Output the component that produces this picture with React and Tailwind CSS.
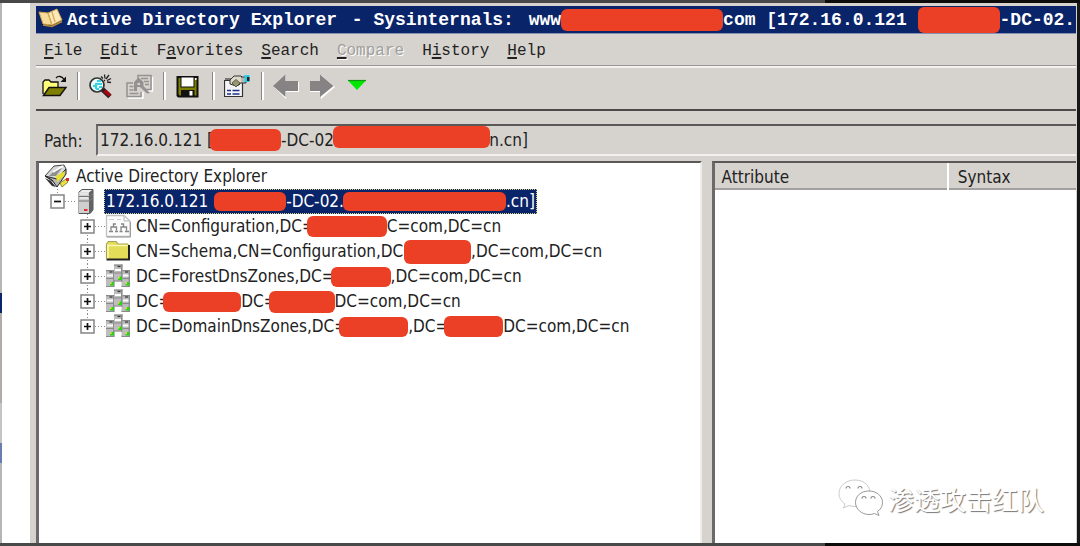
import React from "react";

const UI = "font-['DejaVu_Sans_Condensed','DejaVu_Sans',sans-serif]";
const MONO = "font-['Liberation_Mono',monospace]";

function Mask({ className }) {
  return <span aria-hidden="true" className={`shrink-0 rounded-md bg-[#ec4026] ${className}`} />;
}

function BookIcon() {
  return (
    <svg viewBox="0 0 26 20" className="-mt-1 h-5 w-[26px] shrink-0">
      <path d="M1 4 L10 5 L14 17 L5 16 Z" fill="#f6dc9a" stroke="#c9a04c" strokeWidth="1" />
      <path d="M10 5 L19 1 L24 12 L14 17 Z" fill="#fbeab8" stroke="#c9a04c" strokeWidth="1" />
      <path d="M14 4 L17 14 M10 5 L14 17" stroke="#d8ac58" strokeWidth="1.4" />
      <path d="M5 17 L14 18.500 L24 13.500" fill="none" stroke="#b88a38" strokeWidth="1.5" />
    </svg>
  );
}

function OpenIcon() {
  return (
    <svg viewBox="0 0 28 28" className="size-7">
      <path d="M3 22 V10 L5 8 H9 L11 10 H18 V15" fill="#ffff7a" stroke="#111" strokeWidth="1.3" />
      <path d="M3.500 23.500 L9 15.500 H26 L20 23.500 Z" fill="#808000" stroke="#111" strokeWidth="1.4" />
      <path d="M16 6 C18 3.500 22 4 24 7.500" fill="none" stroke="#111" strokeWidth="1.3" />
      <path d="M26 4.500 V10 H20.500 Z" fill="#111" />
    </svg>
  );
}

function FindIcon() {
  return (
    <svg viewBox="0 0 28 28" className="size-7">
      <circle cx="8" cy="13" r="7" fill="#eaffff" stroke="#333" strokeWidth="1.700" />
      <path d="M4 14 h3 v3 M8 9 h4 M6 12 h5 M10 15 h3 M7 17 h3 M11 12 h2" stroke="#35d5e0" strokeWidth="2" fill="none" />
      <path d="M12 4.500 l2 2 M15.500 2.500 l.5 4 M20 3 l-3 4 M22 6.500 l-4 2 M22 10.500 l-4 -.5 M16 8 l-1 1" stroke="#222" strokeWidth="1.300" />
      <path d="M13.500 17.500 L21 24.500" stroke="#222" strokeWidth="5" />
      <path d="M15.500 18.500 L21 23.500" stroke="#b00010" strokeWidth="3.400" />
    </svg>
  );
}

function CompareIcon() {
  return (
    <svg viewBox="0 0 28 28" className="size-7">
      <path d="M26.500 5 V19 H20 M2 26 H17 V20" fill="none" stroke="#fff" strokeWidth="1.500" />
      <path d="M12 10 V3.500 H25 V17.500 H20" fill="none" stroke="#949291" strokeWidth="1.500" />
      <path d="M15 6.500 h7 M18 9.500 h5 M19 12.500 h4" stroke="#949291" strokeWidth="1.300" />
      <path d="M7 11 H1 V24.500 H15 V20" fill="none" stroke="#949291" strokeWidth="1.500" />
      <path d="M3.500 14.500 h4 M3.500 18 h4 M3.500 21.500 h9" stroke="#949291" strokeWidth="1.300" />
      <path d="M8 19 V10 L12.500 5.500 L17.500 10 V14 L24 21 L21 21.500 L14 15 H11 V19 Z" fill="#949291" />
      <path d="M11.500 12 h2.500" stroke="#d6d3ce" strokeWidth="2" />
    </svg>
  );
}

function SaveIcon() {
  return (
    <svg viewBox="0 0 28 28" className="size-7">
      <path d="M1.500 4 H23.500 V25.500 H3 L1.500 24 Z" fill="#111" />
      <path d="M3.500 6 H21.500 V23.500 H4.500 L3.500 22 Z" fill="#808000" />
      <rect x="5.500" y="4.500" width="14" height="11" fill="#111" />
      <rect x="6.500" y="5.500" width="12" height="9" fill="#fff" />
      <rect x="6" y="18" width="13.500" height="7" fill="#111" />
      <rect x="14.500" y="19" width="3" height="4.500" fill="#fff" />
      <path d="M20 6 h1.500 v2 h-1.500z" fill="#fff" />
    </svg>
  );
}

function PropertiesIcon() {
  return (
    <svg viewBox="0 0 28 28" className="size-7">
      <path d="M.5 8.500 H18.500 V24.500 H.5 Z" fill="#f4f4f4" stroke="#333" strokeWidth="1.200" />
      <path d="M1 7 H9" stroke="#777" strokeWidth="2" />
      <path d="M3 18.500 h4 M8.500 18.500 h7 M3 22 h4 M8.500 22 h7" stroke="#1d2f8d" strokeWidth="1.500" />
      <path d="M6 8 L10 4 H17 L20 7 L15 13 L12 14 L6 12 Z" fill="#ddd9c8" stroke="#333" strokeWidth="1" />
      <path d="M8 11 L12 7.500 L16 11 L12 15 Z" fill="#9a976a" stroke="#444" strokeWidth=".8" />
      <path d="M17 5 H22 V11 H17" fill="#b9b8b0" stroke="#333" strokeWidth="1" />
      <rect x="20.500" y="3" width="5" height="7" fill="#29cbe8" />
      <rect x="23" y="5" width="2.500" height="4" fill="#222" />
    </svg>
  );
}

function ArrowIcon({ right }) {
  return (
    <svg viewBox="0 0 28 28" className="size-7">
      <path
        d={right ? "M0 10 H11 V3 L25 15 L11 27 V20 H0 Z" : "M26 10 H13 V3 L1 15 L13 27 V20 H26 Z"}
        fill="#fff"
      />
      <path
        d={right ? "M0 9 H10 V2.500 L23.500 14 L10 25 V19 H0 Z" : "M25 9 H12.500 V2.500 L0 14 L12.500 25 V19 H25 Z"}
        fill="#858384"
      />
    </svg>
  );
}

function DropIcon() {
  return (
    <svg viewBox="0 0 28 28" className="size-7">
      <path d="M1 8.500 H19 L10 18 Z" fill="#00e800" />
      <path d="M1 8.500 H19" stroke="#139313" strokeWidth="1.200" />
    </svg>
  );
}

function Expander({ open, last }) {
  return (
    <svg viewBox="0 0 25 25" className="h-[25px] w-[25px] shrink-0">
      <path d={last || open ? "M7.500 0 V6" : "M7.500 0 V25"} stroke="#8a8a8a" strokeDasharray="1 2" />
      <path d="M15 12.500 H25" stroke="#8a8a8a" strokeDasharray="1 2" />
      <rect x="1" y="6" width="13" height="13" fill="#fff" stroke="#858585" strokeWidth="1.500" />
      <path d={open ? "M4 12.500 H11" : "M4 12.500 H11 M7.500 9 V16"} stroke="#111" strokeWidth="1.700" />
    </svg>
  );
}

function RootIcon() {
  return (
    <svg viewBox="0 0 28 25" className="h-[25px] w-7 shrink-0">
      <path d="M1 12 L10 2 L20 1 L22 5 L14 16 L8 17 Z" fill="#d8d8d8" stroke="#444" strokeWidth="1" />
      <path d="M5 12 L12 5 L18 4 L12 12 Z" fill="#8e8e8e" />
      <path d="M9 8 L19 2" stroke="#fff" strokeWidth="1.500" />
      <path d="M1 12 L8 16 L13 23 L22 10 V5 L13 15 Z" fill="#b5b5b5" stroke="#222" strokeWidth="1" />
      <path d="M1 14 L7 17 L12 23 L8 22 Z" fill="#333" />
      <path d="M12 12 L21 7 L20 12 L13 18 Z" fill="#e5e02a" />
      <path d="M16 19 L22 15 L24 18 L18 23 Z" fill="#ebe24a" stroke="#6d6a10" strokeWidth=".8" />
      <rect x="22" y="14" width="3" height="3" fill="#d92a25" />
    </svg>
  );
}

function ServerIcon() {
  return (
    <svg viewBox="0 0 25 25" className="h-[25px] w-[25px] shrink-0">
      <path d="M4 3 L7 .5 H18 V21 L15 24.500 H4 Z" fill="#8b8b8b" stroke="#555" strokeWidth="1" />
      <path d="M4 3 H14 V24 H4 Z" fill="#cfcfcf" />
      <path d="M14 3 L18 .5 V21 L15 24.500 H14 Z" fill="#626262" />
      <path d="M4.500 3.500 L7 1 H17 L14 3.500 Z" fill="#eee" />
      <path d="M4 7.500 H14 L18 5 M4 12 H14 L18 9" fill="none" stroke="#777" strokeWidth="1.200" />
      <path d="M5 9 h8 M5 5 h8" stroke="#fff" />
      <rect x="9" y="20" width="3.500" height="2" fill="#dc3030" />
    </svg>
  );
}

function ConfigIcon() {
  return (
    <svg viewBox="0 0 28 25" className="h-[25px] w-7 shrink-0">
      <path d="M1.500 1.500 H19 L25 7 V22.500 H1.500 Z" fill="#fcfcfc" stroke="#c0c0c0" strokeWidth="1.300" />
      <path d="M19 2 V7 H25" fill="none" stroke="#b5b5b5" />
      <path d="M2 23 H25.500 V8" fill="none" stroke="#9b9b9b" strokeWidth="1" />
      <path
        d="M6 16.500 V13 H11.500 V16.500 M8.500 13 V10 H11 M16 16.500 V13 H21.500 V16.500 M18.500 13 V10 H16 M4 17.500 h4 M10 17.500 h3 M14.500 17.500 h3 M20 17.500 h4"
        fill="none"
        stroke="#858585"
        strokeWidth="1.300"
      />
      <path d="M4 5.500 h5 M12 5.500 h4" stroke="#ccc" />
    </svg>
  );
}

function FolderIcon() {
  return (
    <svg viewBox="0 0 28 25" className="h-[25px] w-7 shrink-0">
      <path d="M2.500 5 L4 2.500 H11 L13 5 H24 V20 H2.500 Z" fill="#e2dc58" />
      <path d="M1.500 19.500 V5 L3.500 2.500 H11 L13 5 H23" fill="none" stroke="#a5a04b" strokeWidth="1.200" />
      <path d="M3 19 V6.500 H22.500" fill="none" stroke="#fbf8b0" strokeWidth="1.500" />
      <path d="M1.500 20.500 H24 V6" fill="none" stroke="#222" strokeWidth="2" />
    </svg>
  );
}

function Rack({ x, y }) {
  return (
    <g transform={`translate(${x} ${y})`}>
      <rect width="8.500" height="17" fill="#bdbdbd" />
      <rect x="7" width="1.500" height="17" fill="#8f8f8f" />
      <path d="M0 .7 H8.500 M0 8.500 H8 M0 16.500 H8" stroke="#8a8a8a" strokeWidth="1.200" />
      <path d="M1 5.500 H7" stroke="#fff" strokeWidth="2" />
      <path d="M3.500 2 H6.500" stroke="#333" strokeWidth="1.200" />
      <path d="M4 15.500 V14 L6 12 H8 V15.500 Z" fill="#2fd01c" />
      <rect x="4" y="12.500" width="1.500" height="1.500" fill="#e5e632" />
    </g>
  );
}

function DomainIcon() {
  return (
    <svg viewBox="0 0 28 25" className="h-[25px] w-7 shrink-0">
      <Rack x={1} y={6} />
      <Rack x={16.5} y={6} />
      <Rack x={9} y={0.5} />
    </svg>
  );
}

function MenuItem({ label, hot, disabled }) {
  return (
    <button
      type="button"
      disabled={disabled}
      className={disabled ? "text-[#a09e9b] [text-shadow:1px_1px_#fff]" : "text-[#222]"}
    >
      {label.slice(0, hot)}
      <span className="underline decoration-[#222] decoration-2 underline-offset-2">{label[hot]}</span>
      {label.slice(hot + 1)}
    </button>
  );
}

function Tool({ label, disabled, children }) {
  return (
    <button type="button" aria-label={label} disabled={disabled} className="shrink-0">
      {children}
    </button>
  );
}

function Separator() {
  return <span className="h-7 w-[3px] shrink-0 border-l border-[#8a8886] bg-white" />;
}

function Node({ icon, last, children }) {
  return (
    <li role="treeitem" aria-expanded="false" className="flex h-[25px] items-center pl-[41px]">
      <Expander last={last} />
      {icon}
      <span className="flex items-center whitespace-pre pl-[3px]">{children}</span>
    </li>
  );
}

function WeChat() {
  return (
    <svg viewBox="0 0 46 40" className="h-10 w-[46px]">
      <path
        d="M17 2 C8 2 1 8 1 15.500 C1 20 3.500 23.500 7 26 L5.500 30 L11 27.500 C13 28.200 15 28.500 17 28.500 C26 28.500 32 22 32 15 C32 8 26 2 17 2 Z"
        fill="#fff"
        stroke="#c4c4c4"
        strokeWidth=".9"
      />
      <path d="M8 10.500 a2 2 0 0 1 4 0 M20 10.500 a2 2 0 0 1 4 0" fill="none" stroke="#888" strokeWidth="1.200" />
      <path
        d="M31 13 C23 13 17.500 18 17.500 24.500 C17.500 31 23.500 36.500 31 36.500 C33 36.500 35 36.200 36.500 35.500 L41 37.500 L39.500 33.500 C42.500 31.500 44.500 28.500 44.500 24.500 C44.500 18 38.500 13 31 13 Z"
        fill="#fff"
        stroke="#999"
        strokeWidth="1"
      />
      <path d="M24 20.500 a2 2 0 0 1 4 0 M33 20.500 a2 2 0 0 1 4 0" fill="none" stroke="#888" strokeWidth="1.200" />
    </svg>
  );
}

export default function App() {
  return (
    <div className={`relative flex h-screen min-h-96 flex-col overflow-hidden bg-[#4a4b4a] text-[17px] text-[#222] ${UI}`}>
      <div className="flex h-[3px] shrink-0">
        <div className="flex-1 bg-[#484848]" />
        <div className="w-[23.6%] bg-[#0d0c0b]" />
      </div>
      <div className="flex min-h-0 flex-1">
        <aside className="flex w-[30px] shrink-0 flex-col bg-white">
          <div className="w-0.5 flex-[29] bg-[#b5b5b5]" />
          <div className="w-0.5 flex-[2] bg-[#0a246a]" />
          <div className="w-0.5 flex-[9] bg-[#b0aba6]" />
          <div className="w-0.5 flex-[4] bg-[#c4c4c4]" />
          <div className="w-0.5 flex-[2] bg-[#6b7cae]" />
          <div className="w-0.5 flex-[8] bg-[#b5b5b5]" />
        </aside>
        <main className="flex min-w-0 flex-1 flex-col border-l-[6px] border-t-[3px] border-[#d6d3ce] bg-[#d6d3ce]">
          <header className={`flex h-7 shrink-0 items-center overflow-hidden border-b border-[#8790b4] bg-[#0a246a] pl-0.5 text-lg font-bold text-white ${MONO}`}>
            <BookIcon />
            <h1 className="flex shrink-0 items-center whitespace-pre pl-[3px]">
              <span>Active Directory Explorer </span>
              <span className="pl-1">- Sysinternals: </span>
              <span className="pl-1">www</span>
              <Mask className="h-[22px] w-[162px]" />
              <span>com [172.16.0.121 </span>
              <Mask className="h-[26px] w-[82px]" />
              <span>-DC-02.</span>
            </h1>
          </header>
          <nav aria-label="Menu" className={`flex h-8 shrink-0 items-center gap-[18px] border-b border-[#9a9896] pl-2 pt-0.5 text-base ${MONO}`}>
            <MenuItem label="File" hot={0} />
            <MenuItem label="Edit" hot={0} />
            <MenuItem label="Favorites" hot={1} />
            <MenuItem label="Search" hot={0} />
            <MenuItem label="Compare" hot={0} disabled />
            <MenuItem label="History" hot={1} />
            <MenuItem label="Help" hot={0} />
          </nav>
          <div role="toolbar" className="flex h-[45px] shrink-0 items-start gap-[9px] border-b-2 border-t-2 border-b-[#4c4a49] border-t-[#f3f2f0] pl-1 pt-1">
            <Tool label="Open"><OpenIcon /></Tool>
            <Separator />
            <Tool label="Search"><FindIcon /></Tool>
            <Tool label="Compare" disabled><CompareIcon /></Tool>
            <Separator />
            <Tool label="Save"><SaveIcon /></Tool>
            <Separator />
            <Tool label="Properties"><PropertiesIcon /></Tool>
            <Separator />
            <Tool label="Back" disabled><ArrowIcon /></Tool>
            <Tool label="Forward" disabled><ArrowIcon right /></Tool>
            <Tool label="History list"><DropIcon /></Tool>
          </div>
          <div className="flex h-[50px] shrink-0 items-end pb-[5px] pl-2">
            <label htmlFor="path" className="w-[52px] pb-0.5">Path:</label>
            <div className="relative flex flex-1">
              <input
                id="path"
                readOnly
                defaultValue="172.16.0.121 [              -DC-02                                n.cn]"
                className="h-8 w-full border-b-2 border-l-2 border-t-2 border-b-[#f3f2f0] border-l-[#6b696a] border-t-[#5a5859] bg-[#d6d3ce] pl-0.5 outline-none"
              />
              <Mask className="absolute left-[114px] top-[5px] h-[22px] w-[71px]" />
              <Mask className="absolute left-[237px] top-[2px] h-[22px] w-[157px]" />
            </div>
          </div>
          <div className="flex min-h-0 flex-1">
            <section className="w-[64%] overflow-hidden border-l-[3px] border-r-2 border-t-2 border-l-[#6b696a] border-r-[#eeedea] border-t-[#5a5859] bg-white pt-px">
              <ul role="tree" aria-label="Directory">
                <li role="treeitem" aria-expanded="true" className="flex h-[25px] items-center gap-1 pl-[5px]">
                  <RootIcon />
                  Active Directory Explorer
                </li>
                <li role="treeitem" aria-expanded="true" aria-selected="true" className="flex h-[25px] items-center pl-[11px]">
                  <Expander open />
                  <ServerIcon />
                  <span className="ml-1 flex h-[25px] items-center whitespace-pre border border-dotted border-[#d9cf86] bg-[#0a246a] px-px text-white">
                    172.16.0.121
                    <Mask className="ml-1.5 h-[19px] w-[72px]" />
                    -DC-02.
                    <Mask className="-ml-px h-[19px] w-[163px]" />
                    .cn]
                  </span>
                </li>
                <Node icon={<ConfigIcon />}>
                  CN=Configuration,DC=
                  <Mask className="-ml-2 h-[21px] w-20" />
                  C=com,DC=cn
                </Node>
                <Node icon={<FolderIcon />}>
                  CN=Schema,CN=Configuration,DC=
                  <Mask className="-ml-3 h-6 w-[67px]" />
                  ,DC=com,DC=cn
                </Node>
                <Node icon={<DomainIcon />}>
                  DC=ForestDnsZones,DC=
                  <Mask className="-ml-1 h-5 w-[60px]" />
                  ,DC=com,DC=cn
                </Node>
                <Node icon={<DomainIcon />}>
                  DC=
                  <Mask className="-ml-2 h-5 w-[78px]" />
                  DC=
                  <Mask className="-ml-2 h-[22px] w-[66px]" />
                  DC=com,DC=cn
                </Node>
                <Node icon={<DomainIcon />} last>
                  DC=DomainDnsZones,DC=
                  <Mask className="-ml-2 h-5 w-[69px]" />
                  ,DC=
                  <Mask className="-ml-1 h-[21px] w-[59px]" />
                  DC=com,DC=cn
                </Node>
              </ul>
            </section>
            <section className="ml-[10px] min-w-0 flex-1 border-l-[3px] border-t-2 border-l-[#6b696a] border-t-[#5a5859] bg-white">
              <table className="w-full table-fixed border-collapse text-left">
                <thead>
                  <tr className="h-[26px] border-b-2 border-[#a3a19f] bg-[#d6d3ce]">
                    <th className="w-[64.5%] border-r border-[#8a8886] pl-[7px] pt-0.5 font-normal leading-5">Attribute</th>
                    <th className="border-l-2 border-white pl-[9px] pt-0.5 font-normal leading-5">Syntax</th>
                  </tr>
                </thead>
              </table>
            </section>
          </div>
        </main>
        <div className="w-1 shrink-0 border-l border-[#d6d3ce] bg-[#171717]" />
      </div>
      <footer className="flex h-[3px] shrink-0">
        <div className="flex-1 bg-[#484a49]" />
        <div className="w-[23.6%] bg-[#0d0c0b]" />
      </footer>
      <div className="absolute bottom-7 right-9 flex items-center gap-1 font-['Noto_Sans_CJK_SC',sans-serif] text-[26px] text-white [text-shadow:1px_1px_1px_#777]">
        <WeChat />
        渗透攻击红队
      </div>
    </div>
  );
}
